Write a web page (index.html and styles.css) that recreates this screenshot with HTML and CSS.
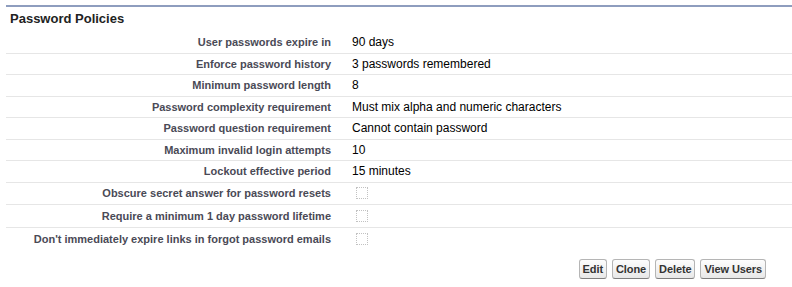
FILE: index.html
```html
<!DOCTYPE html>
<html lang="en">

<head>
  <meta charset="UTF-8">
  <title>Password Policies</title>
  <link rel="stylesheet" href="styles.css">
</head>

<body>
  <div class="block">
    <h3 class="block__title">Password Policies</h3>

    <div class="details">
      <div class="row">
        <div class="row__label">User passwords expire in</div>
        <div class="row__value">90 days</div>
      </div>
      <div class="row">
        <div class="row__label">Enforce password history</div>
        <div class="row__value">3 passwords remembered</div>
      </div>
      <div class="row">
        <div class="row__label">Minimum password length</div>
        <div class="row__value">8</div>
      </div>
      <div class="row">
        <div class="row__label">Password complexity requirement</div>
        <div class="row__value">Must mix alpha and numeric characters</div>
      </div>
      <div class="row">
        <div class="row__label">Password question requirement</div>
        <div class="row__value">Cannot contain password</div>
      </div>
      <div class="row">
        <div class="row__label">Maximum invalid login attempts</div>
        <div class="row__value">10</div>
      </div>
      <div class="row">
        <div class="row__label">Lockout effective period</div>
        <div class="row__value">15 minutes</div>
      </div>
      <div class="row row--check">
        <div class="row__label">Obscure secret answer for password resets</div>
        <div class="row__value"><span class="checkbox"></span></div>
      </div>
      <div class="row row--check">
        <div class="row__label">Require a minimum 1 day password lifetime</div>
        <div class="row__value"><span class="checkbox"></span></div>
      </div>
      <div class="row row--check row--last">
        <div class="row__label">Don't immediately expire links in forgot password emails</div>
        <div class="row__value"><span class="checkbox"></span></div>
      </div>
    </div>

    <div class="buttons">
      <button class="btn">Edit</button>
      <button class="btn">Clone</button>
      <button class="btn">Delete</button>
      <button class="btn">View Users</button>
    </div>
  </div>
</body>

</html>
```

FILE: styles.css
```css
* {
  margin: 0;
  padding: 0;
  box-sizing: border-box;
}

body {
  background: #fff;
  font-family: "Liberation Sans", Arial, sans-serif;
  color: #000;
}

/* ============= block ============= */
.block {
  margin: 5px 0 0 6px;
  border-top: 2px solid #8e9dbe;
}

.block__title {
  height: 25px;
  padding: 4px 0 0 4px;
  font-size: 13px;
  font-weight: 700;
  line-height: 16px;
  color: #222;
}

/* ============= rows ============= */
.row {
  display: grid;
  grid-template-columns: 335px 1fr;
  height: 21.5px;
  border-bottom: 1px solid #e6e6e6;
  align-items: center;
}

.row--check {
  height: 22.5px;
}

.row--last {
  border-bottom: none;
}

.row__label {
  padding-right: 10px;
  text-align: right;
  font-size: 11px;
  font-weight: 700;
  color: #4a4a56;
}

.row__value {
  padding-left: 11px;
  font-size: 12px;
  color: #000;
  display: flex;
  align-items: center;
}

.checkbox {
  display: block;
  width: 12px;
  height: 12px;
  margin-left: 4px;
  border: 1px dotted #c2c2c2;
}

/* ============= buttons ============= */
.buttons {
  display: flex;
  justify-content: flex-end;
  gap: 5px;
  padding: 9px 26px 0 0;
}

.btn {
  height: 20px;
  padding: 0 3px;
  font-family: "Liberation Sans", Arial, sans-serif;
  font-size: 11px;
  font-weight: 700;
  letter-spacing: -0.1px;
  color: #333;
  background: linear-gradient(to bottom, #fdfdfd, #e8e8e8);
  border: 1px solid #b5b5b5;
  border-bottom-color: #7f7f7f;
  border-radius: 3px;
}
```
